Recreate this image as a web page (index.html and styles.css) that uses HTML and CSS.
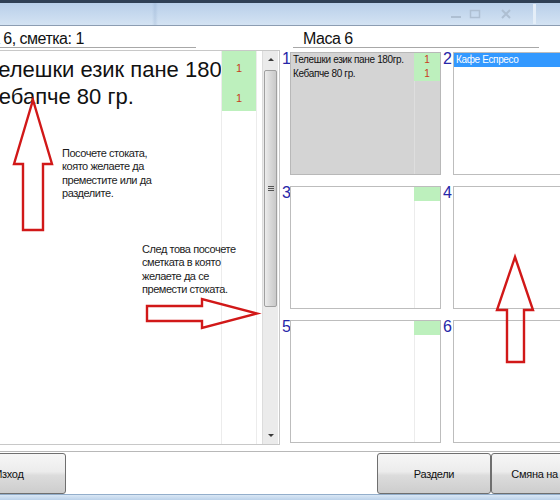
FILE: index.html
```html
<!DOCTYPE html>
<html lang="bg">
<head>
<meta charset="utf-8">
<title>Маса 6</title>
<link rel="stylesheet" href="styles.css">
</head>
<body>
<div class="window">
  <div class="titlebar">
    <svg class="controls" width="90" height="20" viewBox="0 0 90 20">
      <rect x="4" y="12" width="10" height="2" fill="#aebfd2"/>
      <rect x="23.5" y="6.5" width="9" height="7" fill="none" stroke="#aebfd2" stroke-width="1.5"/>
      <path d="M55 6 L63 14 M63 6 L55 14" stroke="#aebfd2" stroke-width="2"/>
      <rect x="86" y="0" width="3" height="20" fill="#e4eef8"/>
    </svg>
  </div>
  <div class="main">
    <section class="left">
      <div class="hdr hdr-left">Маса 6, сметка: 1</div>
      <div class="list">
        <div class="names">
          <div class="name">Телешки език пане 180гр.</div>
          <div class="name">Кебапче 80 гр.</div>
        </div>
        <div class="qtys">
          <div class="qty">1</div>
          <div class="qty">1</div>
        </div>
        <div class="spacer"></div>
        <div class="scrollbar">
          <div class="sb-btn up"></div>
          <div class="sb-track"><div class="thumb"><span class="grip"></span></div></div>
          <div class="sb-btn down"></div>
        </div>
      </div>
    </section>
    <section class="right">
      <div class="hdr hdr-right">Маса 6</div>
      <div class="tables">
        <div class="lbl">1</div>
        <div class="cell selected">
          <div class="cnames">
            <div class="row">Телешки език пане 180гр.</div>
            <div class="row">Кебапче 80 гр.</div>
          </div>
          <div class="cqty">
            <div class="row q">1</div>
            <div class="row q">1</div>
          </div>
        </div>
        <div class="lbl">2</div>
        <div class="cell">
          <div class="cnames"><div class="row hl">Кафе Еспресо</div></div>
          <div class="cqty"><div class="row q">1</div></div>
        </div>
        <div class="lbl">3</div>
        <div class="cell">
          <div class="cnames"></div>
          <div class="cqty"><div class="row q"></div></div>
        </div>
        <div class="lbl">4</div>
        <div class="cell">
          <div class="cnames"></div>
          <div class="cqty"><div class="row q"></div></div>
        </div>
        <div class="lbl">5</div>
        <div class="cell">
          <div class="cnames"></div>
          <div class="cqty"><div class="row q"></div></div>
        </div>
        <div class="lbl">6</div>
        <div class="cell">
          <div class="cnames"></div>
          <div class="cqty"><div class="row q"></div></div>
        </div>
      </div>
    </section>
  </div>
  <div class="actions">
    <div class="bar">
      <button class="btn btn-exit">Изход</button>
      <button class="btn">Раздели</button>
      <button class="btn">Смяна на маса</button>
    </div>
  </div>
  <div class="frame-bottom"></div>

  <div class="notes">
    <svg class="arrows" width="560" height="500" viewBox="0 0 560 500">
      <polygon points="33,100 52,164 43,164 43,230 23,230 23,164 14,164" fill="none" stroke="#d11818" stroke-width="2.4" stroke-linejoin="miter"/>
      <polygon points="147,306 202,306 202,299 257,313.5 202,328 202,321 147,321" fill="none" stroke="#d11818" stroke-width="2.4"/>
      <polygon points="515,257 533,310 524,310 524,362 507,362 507,310 497,310" fill="none" stroke="#d11818" stroke-width="2.4"/>
    </svg>
    <p class="note note1">Посочете стоката,<br>която желаете да<br>преместите или да<br>разделите.</p>
    <p class="note note2">След това посочете<br>сметката в която<br>желаете да се<br>премести стоката.</p>
  </div>
</div>
</body>
</html>
```

FILE: styles.css
```css
html, body {
  margin: 0;
  padding: 0;
  background: #fff;
  overflow: hidden;
}

.window {
  position: relative;
  width: 700px;
  height: 500px;
  margin-left: -60px;
  display: flex;
  flex-direction: column;
  font-family: "Liberation Sans", Arial, sans-serif;
  color: #111;
  background: #fff;
  overflow: hidden;
}

/* title bar */
.titlebar {
  flex: none;
  height: 26px;
  box-sizing: border-box;
  border-top: 3px solid #2f4055;
  border-bottom: 1px solid #8c9db2;
  background:
    linear-gradient(90deg, rgba(255,255,255,0) 212px, rgba(110,140,180,0.18) 215px, rgba(255,255,255,0) 218px),
    linear-gradient(#b8cfe9, #d4e3f3);
  display: flex;
  justify-content: flex-end;
  align-items: center;
  padding-right: 103px;
}

.controls {
  display: block;
}

/* main area */
.main {
  flex: none;
  height: 419px;
  display: flex;
}

.left {
  flex: none;
  width: 340px;
  display: flex;
  flex-direction: column;
}

.hdr {
  height: 22px;
  box-sizing: border-box;
  border-bottom: 1px solid #a8a8a8;
  font-size: 16px;
  letter-spacing: -0.5px;
  line-height: 20px;
  padding-top: 3px;
  white-space: nowrap;
  color: #111;
}

.hdr-left {
  margin-left: 12px;
  width: 244px;
  padding-left: 10px;
}

.list {
  margin-top: 2px;
  margin-left: 20px;
  width: 320px;
  height: 395px;
  box-sizing: border-box;
  border: 1px solid #c8c8c8;
  display: flex;
}

.names {
  flex: none;
  width: 260px;
  box-sizing: border-box;
  padding: 5px 0 0 25px;
  overflow: hidden;
  font-size: 22px;
  line-height: 27px;
  white-space: nowrap;
  text-overflow: clip;
  color: #111;
}

.qtys {
  flex: none;
  width: 36px;
  box-sizing: border-box;
  border-left: 1px solid #ececec;
  border-right: 1px solid #ececec;
}

.qty {
  height: 30px;
  box-sizing: border-box;
  padding-top: 4px;
  line-height: 26px;
  background: #bdf0bd;
  color: #c83c1c;
  font-size: 11px;
  text-align: center;
}

.spacer {
  flex: none;
  width: 5px;
}

.scrollbar {
  flex: none;
  width: 16px;
  box-sizing: border-box;
  border-left: 1px solid #dcdcdc;
  background: #ebebeb;
  display: flex;
  flex-direction: column;
}

.sb-btn {
  flex: none;
  height: 17px;
  display: flex;
  align-items: center;
  justify-content: center;
}

.sb-btn.up::before,
.sb-btn.down::before {
  content: "";
  width: 0;
  height: 0;
  border-left: 3.5px solid transparent;
  border-right: 3.5px solid transparent;
}

.sb-btn.up::before {
  border-bottom: 3px solid #3a3a3a;
}

.sb-btn.down::before {
  border-top: 3px solid #3a3a3a;
}

.sb-track {
  flex: 1;
  padding: 2px 1px;
}

.thumb {
  height: 237px;
  box-sizing: border-box;
  border: 1px solid #a0a0a0;
  border-radius: 2px;
  background: linear-gradient(90deg, #ececec, #d8d8d8 50%, #c9c9c9);
  display: flex;
  align-items: center;
  justify-content: center;
}

.grip {
  width: 6px;
  height: 5px;
  background: repeating-linear-gradient(#555 0 1px, transparent 1px 2px);
}

/* right: tables */
.right {
  flex: none;
  width: 360px;
  display: flex;
  flex-direction: column;
}

.hdr-right {
  margin-left: 13px;
  width: 246px;
  padding-left: 10px;
}

.tables {
  margin-top: 4px;
  display: grid;
  grid-template-columns: 10px 151px 12px 151px;
  grid-template-rows: repeat(3, 123px);
  row-gap: 11px;
}

.lbl {
  color: #2626a8;
  font-size: 16px;
  line-height: 16px;
  padding-left: 2px;
  margin-top: -1px;
}

.cell {
  border: 1px solid #bdbdbd;
  display: grid;
  grid-template-columns: 123px 26px;
  background: #fff;
  overflow: hidden;
}

.cell.selected {
  background: #d4d4d4;
  border-color: #b8b8b8;
}

.cqty {
  box-shadow: inset 1px 0 #ececec;
}

.selected .cqty {
  box-shadow: inset 1px 0 #dedede;
}

.row {
  height: 14px;
  padding-left: 2px;
  font-size: 10px;
  letter-spacing: -0.35px;
  line-height: 14px;
  white-space: nowrap;
  overflow: hidden;
  color: #111;
}

.row.q {
  padding: 0;
  background: #bdf0bd;
  color: #c83c1c;
  text-align: center;
  letter-spacing: 0;
}

.row.hl {
  background: #3399ff;
  color: #fff;
}

/* bottom buttons */
.actions {
  flex: none;
  height: 49px;
  box-sizing: border-box;
  padding-top: 6px;
}

.bar {
  height: 43px;
  box-sizing: border-box;
  border-top: 1px solid #b8b8b8;
  padding: 1px 35px 0 12px;
  display: flex;
}

.btn {
  width: 114px;
  height: 41px;
  margin: 0;
  padding: 0;
  box-sizing: border-box;
  border: 1px solid #6f6f6f;
  border-radius: 3px;
  background: linear-gradient(#f6f6f6 0%, #ececec 45%, #dcdcdc 55%, #cdcdcd 100%);
  font-family: "Liberation Sans", Arial, sans-serif;
  font-size: 11px;
  letter-spacing: -0.3px;
  color: #111;
}

.btn-exit {
  margin-right: auto;
}

.frame-bottom {
  flex: none;
  height: 6px;
  box-sizing: border-box;
  border-top: 1px solid #93aecb;
  background: linear-gradient(#d9e7f5, #bcd2ea);
}

/* annotation overlay */
.notes {
  position: absolute;
  left: 60px;
  top: 0;
  width: 560px;
  height: 500px;
  pointer-events: none;
}

.arrows {
  position: absolute;
  left: 0;
  top: 0;
}

.note {
  position: absolute;
  margin: 0;
  font-size: 11px;
  letter-spacing: -0.45px;
  line-height: 13.3px;
  color: #1c1c1c;
  white-space: nowrap;
}

.note1 {
  left: 62px;
  top: 147px;
}

.note2 {
  left: 142px;
  top: 243px;
}
```
